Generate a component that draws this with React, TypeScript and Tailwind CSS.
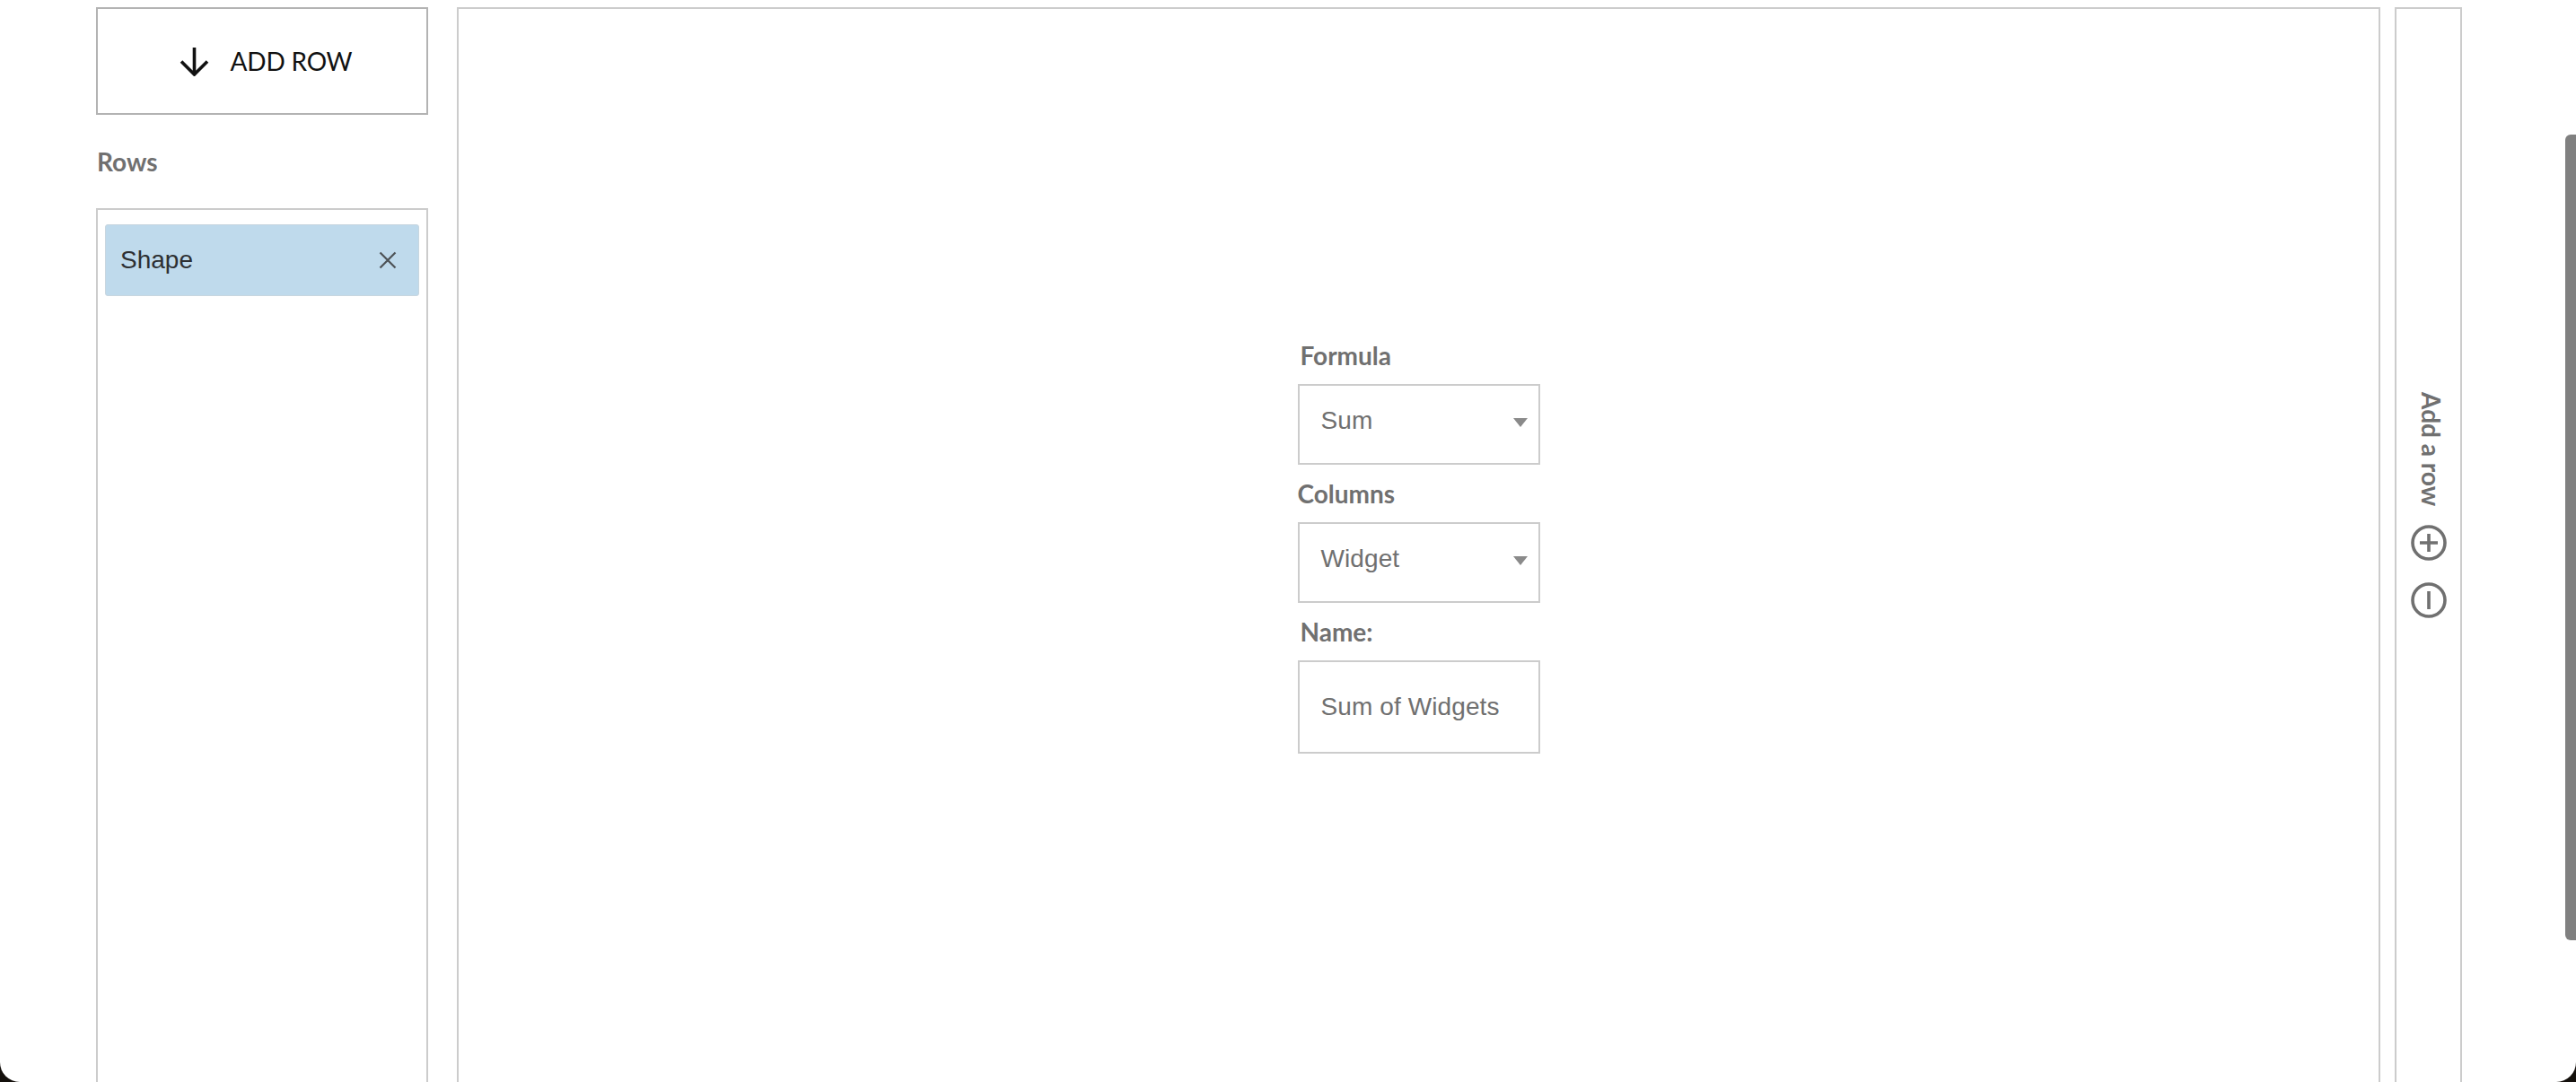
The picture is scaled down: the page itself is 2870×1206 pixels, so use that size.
export default function App() {
  const labelCls = "font-['Lato',sans-serif] font-bold text-[28px] leading-[34px] text-[#707070]";
  const fieldCls = "w-[270px] border-2 border-[#cccccc] pl-[24px] font-['Liberation_Sans',sans-serif] text-[28px] leading-[32px] tracking-[0.1px] text-[#707070]";
  const Caret = () => (
    <svg width="16" height="10" viewBox="0 0 16 10" className="absolute right-[12px] top-[36px]">
      <path d="M0 0H16L8 10Z" fill="#8a8a8a" />
    </svg>
  );
  return (
    <div className="h-[1206px] w-full overflow-hidden bg-[#14100c]">
      <div className="relative h-full overflow-hidden rounded-b-[22px] bg-white">
        <div className="flex h-full items-start gap-[16px] pl-[107px] pt-[8px]">
          <div className="flex w-[370px] shrink-0 flex-col">
            <div className="flex h-[120px] items-center justify-center gap-[24px] border-2 border-[#b3b3b3] pl-[8px]">
              <svg width="33" height="33" viewBox="0 0 33 33" fill="none" stroke="#111" strokeWidth="3.6">
                <path d="M16.5 1V31M2 16.5L16.5 31L31 16.5" />
              </svg>
              <span className="font-['Lato',sans-serif] text-[28px] leading-[34px] tracking-[-0.2px] text-[#111]">ADD ROW</span>
            </div>
            <div className="mt-[35px] pl-px font-['Lato',sans-serif] font-bold text-[28px] leading-[34px] text-[#707070]">Rows</div>
            <div className="mt-[35px] h-[1100px] border-2 border-[#cccccc] px-[8px] pt-[16px]">
              <div className="flex h-[80px] items-center justify-between rounded-[3px] border border-[#c8d6df] bg-[#bfdaec] pl-[16px] pr-[24px]">
                <span className="font-['Liberation_Sans',sans-serif] text-[28px] leading-[32px] text-[#2d3033]">Shape</span>
                <svg width="20" height="20" viewBox="0 0 20 20" fill="none" stroke="#4d5256" strokeWidth="2.2">
                  <path d="M1.5 1.5L18.5 18.5M18.5 1.5L1.5 18.5" />
                </svg>
              </div>
            </div>
          </div>
          <div className="ml-[16px] flex h-[1300px] w-[2143px] shrink-0 justify-center border-2 border-[#cccccc] pt-[369px]">
            <div className="flex w-[270px] flex-col">
              <div className={`${labelCls} pl-[3px]`}>Formula</div>
              <div className={`${fieldCls} relative mt-[15px] h-[90px] pt-[23px]`}>
                Sum
                <Caret />
              </div>
              <div className={`${labelCls} mt-[15px]`}>Columns</div>
              <div className={`${fieldCls} relative mt-[15px] h-[90px] pt-[23px]`}>
                Widget
                <Caret />
              </div>
              <div className={`${labelCls} mt-[15px] pl-[3px]`}>Name:</div>
              <div className={`${fieldCls} mt-[15px] flex h-[104px] items-center`}>Sum of Widgets</div>
            </div>
          </div>
          <div className="flex h-[1300px] w-[75px] shrink-0 flex-col items-center border-2 border-[#cccccc] pt-[427px]">
            <span className="ml-[6px] font-['Lato',sans-serif] font-bold text-[28px] leading-[30px] text-[#707070] [writing-mode:vertical-rl]">Add a row</span>
            <svg width="40" height="40" viewBox="0 0 40 40" fill="none" stroke="#707070" strokeWidth="3.6" className="mt-[21px]">
              <circle cx="20" cy="20" r="18" />
              <path d="M10 20H30M20 10V30" />
            </svg>
            <svg width="40" height="40" viewBox="0 0 40 40" fill="none" stroke="#707070" strokeWidth="3.6" className="mt-[24px]">
              <circle cx="20" cy="20" r="18" />
              <path d="M20 10V30" />
            </svg>
          </div>
        </div>
        <div className="absolute right-0 top-[150px] h-[898px] w-[12px] rounded-l-[6px] rounded-r-none bg-[#808080]" />
      </div>
    </div>
  );
}
